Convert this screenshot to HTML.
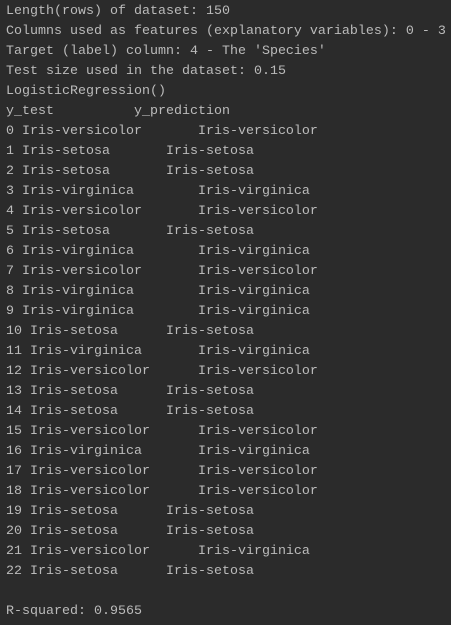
<!DOCTYPE html>
<html><head><style>
body{margin:0;background:#2b2b2b;width:451px;height:625px;overflow:hidden}
.l{position:absolute;left:6px;height:20px;line-height:20px;white-space:pre;font-family:"Liberation Mono",monospace;font-size:13.33px;color:#bbbbbb}
</style></head><body>
<div class="l" style="top:2px">Length(rows) of dataset: 150</div>
<div class="l" style="top:22px">Columns used as features (explanatory variables): 0 - 3</div>
<div class="l" style="top:42px">Target (label) column: 4 - The 'Species'</div>
<div class="l" style="top:62px">Test size used in the dataset: 0.15</div>
<div class="l" style="top:82px">LogisticRegression()</div>
<div class="l" style="top:102px">y_test          y_prediction</div>
<div class="l" style="top:122px">0 Iris-versicolor       Iris-versicolor</div>
<div class="l" style="top:142px">1 Iris-setosa       Iris-setosa</div>
<div class="l" style="top:162px">2 Iris-setosa       Iris-setosa</div>
<div class="l" style="top:182px">3 Iris-virginica        Iris-virginica</div>
<div class="l" style="top:202px">4 Iris-versicolor       Iris-versicolor</div>
<div class="l" style="top:222px">5 Iris-setosa       Iris-setosa</div>
<div class="l" style="top:242px">6 Iris-virginica        Iris-virginica</div>
<div class="l" style="top:262px">7 Iris-versicolor       Iris-versicolor</div>
<div class="l" style="top:282px">8 Iris-virginica        Iris-virginica</div>
<div class="l" style="top:302px">9 Iris-virginica        Iris-virginica</div>
<div class="l" style="top:322px">10 Iris-setosa      Iris-setosa</div>
<div class="l" style="top:342px">11 Iris-virginica       Iris-virginica</div>
<div class="l" style="top:362px">12 Iris-versicolor      Iris-versicolor</div>
<div class="l" style="top:382px">13 Iris-setosa      Iris-setosa</div>
<div class="l" style="top:402px">14 Iris-setosa      Iris-setosa</div>
<div class="l" style="top:422px">15 Iris-versicolor      Iris-versicolor</div>
<div class="l" style="top:442px">16 Iris-virginica       Iris-virginica</div>
<div class="l" style="top:462px">17 Iris-versicolor      Iris-versicolor</div>
<div class="l" style="top:482px">18 Iris-versicolor      Iris-versicolor</div>
<div class="l" style="top:502px">19 Iris-setosa      Iris-setosa</div>
<div class="l" style="top:522px">20 Iris-setosa      Iris-setosa</div>
<div class="l" style="top:542px">21 Iris-versicolor      Iris-virginica</div>
<div class="l" style="top:562px">22 Iris-setosa      Iris-setosa</div>
<div class="l" style="top:602px">R-squared: 0.9565</div>
</body></html>
